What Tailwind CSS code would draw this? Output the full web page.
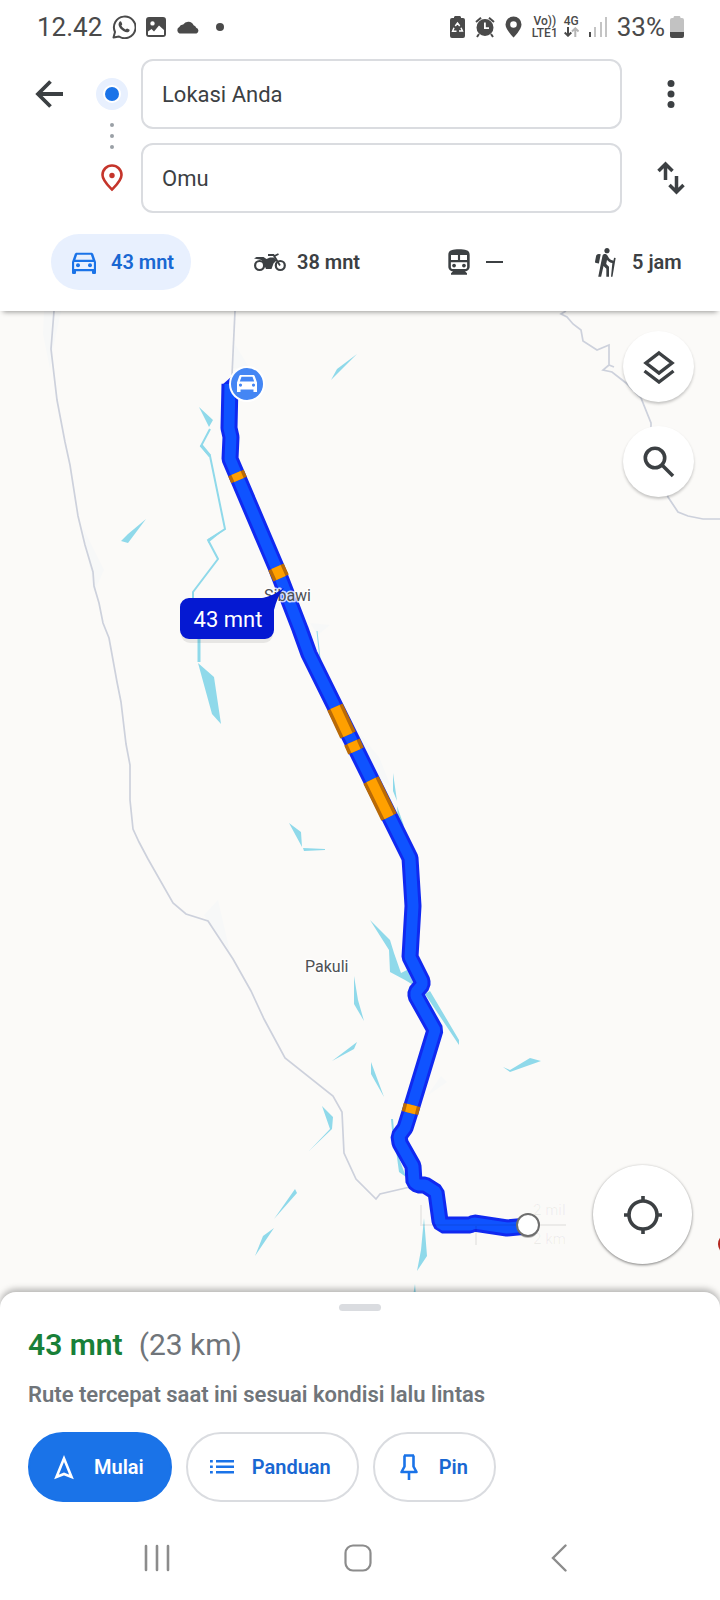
<!doctype html>
<html lang="id">
<head>
	<meta charset="utf-8">
	<meta name="viewport" content="width=device-width, initial-scale=1.0">
	<title>Rute ke Omu</title>
	<script src="https://cdn.jsdelivr.net/npm/@tailwindcss/browser@4"></script>
</head>
<body class="bg-white font-[Roboto,sans-serif] text-[#3c4043]">
	<div class="min-h-screen flex flex-col">

		<!-- status bar -->
		<div class="h-[53px] flex items-center justify-between pl-[37px] pr-9 text-[26px] leading-none text-[#4a4a4a]">
			<div class="flex items-center gap-[10px]">
				<span>12.42</span>
				<svg class="size-6" viewBox="0 0 24 24" fill="none" stroke="currentColor" stroke-width="2">
					<path d="M1.500 22.500l1.500-5.500A10.800 10.800 0 1 1 7 21.500z" stroke-linejoin="round"/>
					<path d="M7.200 7.200c.7-1.200 1.800-1 2.200-.2l.8 1.900c.2.500-.8 1.300-.8 1.700.8 1.800 2.200 3 4 3.800.5.1 1.200-1.100 1.700-1l2.200 1c.6.500.2 1.800-.5 2.300-1.300 1-3 .8-5.500-.6-2.200-1.300-4.100-3.700-4.600-5.500-.3-1.300 0-2.500.5-3.400z" fill="currentColor" stroke="none"/>
				</svg>
				<svg class="w-5 h-[22px]" viewBox="0 0 20 22">
					<path fill="currentColor" fill-rule="evenodd" d="M3 1h14a3 3 0 0 1 3 3v14a3 3 0 0 1-3 3H3a3 3 0 0 1-3-3V4a3 3 0 0 1 3-3zM2 15.500V19h16v-5l-5-4.500-5 6-2.500-2.500zM6.500 5.200a2.200 2.200 0 1 0 0 4.400 2.200 2.200 0 0 0 0-4.400z"/>
				</svg>
				<svg class="w-6 h-[14px]" viewBox="0 0 24 14"><path fill="currentColor" d="M3.500 13.500a3.500 3.500 0 0 1-.2-6.400 4 4 0 0 1 3.900-2.700A6 6 0 0 1 17.600 5.200a3.500 3.500 0 0 1 2.600 2.600 3 3 0 0 1 .3 5.700z"/></svg>
				<span class="size-2 rounded-full bg-[#4a4a4a] ml-[6px]"></span>
			</div>
			<div class="flex items-center gap-[10px]">
				<svg class="w-[15px] h-[22px]" viewBox="0 0 15 22">
					<path fill="currentColor" d="M4 2V1.500C4 .6 4.600 0 5.500 0h4c.9 0 1.500.6 1.500 1.500V2h2a2 2 0 0 1 2 2v16a2 2 0 0 1-2 2H2a2 2 0 0 1-2-2V4a2 2 0 0 1 2-2z"/>
					<path fill="none" stroke="#fff" stroke-width="1.500" d="M5.300 10l2.200-3 2.200 3M11 11.800l1.400 3.200H9M4 11.800L2.600 15.200H6.500"/>
				</svg>
				<svg class="w-5 h-[22px]" viewBox="0 0 20 22">
					<path fill="currentColor" fill-rule="evenodd" d="M10 3a8.500 8.500 0 1 1 0 17 8.500 8.500 0 0 1 0-17zM9 6.500v6.500h5v-1.800h-3.200V6.500z"/>
					<path stroke="currentColor" stroke-width="2" d="M1 6l5-4.300M19 6l-5-4.300M4 18l-2 3M16 18l2 3"/>
				</svg>
				<svg class="w-[17px] h-[22px]" viewBox="0 0 17 22">
					<path fill="currentColor" fill-rule="evenodd" d="M8.500.500a8 8 0 0 1 8 8c0 5-8 13-8 13s-8-8-8-13a8 8 0 0 1 8-8zm0 4.700a3.300 3.300 0 1 0 0 6.600 3.300 3.300 0 0 0 0-6.600z"/>
				</svg>
				<div class="flex gap-[6px] text-xs leading-[12px] font-medium text-center">
					<div>Vo))<br>LTE1</div>
					<div class="flex flex-col items-center">
						4G
						<svg class="w-[15px] h-[10px]" viewBox="0 0 15 10" fill="none" stroke-width="2">
							<path stroke="currentColor" d="M4 0v8.500M.7 5.500L4 8.700l3.300-3.200"/>
							<path stroke="#b5b5b5" d="M11.300 10V1.500M8 4.500l3.300-3.200L14.600 4.500"/>
						</svg>
					</div>
				</div>
				<svg class="w-[18px] h-5" viewBox="0 0 18 20">
					<path fill="currentColor" d="M0 15h2v5H0z"/>
					<path fill="#c4c4c4" d="M5 10h2v10H5zM11 5h2v15h-2zM16 0h2v20h-2z"/>
				</svg>
				<div class="flex items-center gap-[5px]">
					<span>33%</span>
					<svg class="w-[14px] h-[22px]" viewBox="0 0 14 22">
						<path fill="#c2c2c2" d="M3.500 2V1.500C3.500.6 4 0 5 0h4c1 0 1.500.6 1.500 1.500V2H12a2 2 0 0 1 2 2v12H0V4a2 2 0 0 1 2-2z"/>
						<path fill="currentColor" d="M0 16h14v4a2 2 0 0 1-2 2H2a2 2 0 0 1-2-2z"/>
					</svg>
				</div>
			</div>
		</div>

		<!-- directions header -->
		<header class="relative z-10 bg-white pt-[6px] pb-[21px] shadow-[0_4px_5px_-3px_rgba(0,0,0,0.4)]">
			<form class="grid grid-cols-[68px_58px_1fr_98px] gap-y-[14px] items-center justify-items-center pl-[15px]">
				<button type="button" aria-label="Kembali">
					<svg class="size-7" viewBox="0 0 28 28" fill="none" stroke="currentColor" stroke-width="3.800"><path d="M28 14H3M15.500 1.500L3 14l12.500 12.500"/></svg>
				</button>
				<svg class="row-span-2 w-8 h-[116px]" viewBox="0 0 32 116">
					<circle cx="16" cy="16" r="16" fill="#e8f0fe"/>
					<circle cx="16" cy="16" r="9" fill="#fff"/>
					<circle cx="16" cy="16" r="7" fill="#1a73e8"/>
					<g fill="#9aa0a6"><circle cx="16" cy="47" r="2"/><circle cx="16" cy="58" r="2"/><circle cx="16" cy="69" r="2"/></g>
					<path fill="none" stroke="#c5352b" stroke-width="2.600" d="M16 111.500c-4-4-9.500-9-9.500-14.500a9.500 9.500 0 0 1 19 0c0 5.500-5.500 10.500-9.500 14.500z"/>
					<circle cx="16" cy="97.500" r="2.700" fill="#c5352b"/>
				</svg>
				<input type="text" aria-label="Titik awal" value="Lokasi Anda" class="w-full h-[70px] rounded-xl border-2 border-[#dadce0] px-[19px] text-[22px]">
				<button type="button" aria-label="Opsi lainnya">
					<svg class="w-2 h-7" viewBox="0 0 8 28" fill="currentColor"><circle cx="4" cy="3.500" r="3.500"/><circle cx="4" cy="14" r="3.500"/><circle cx="4" cy="24.500" r="3.500"/></svg>
				</button>
				<span></span>
				<input type="text" aria-label="Tujuan" value="Omu" class="w-full h-[70px] rounded-xl border-2 border-[#dadce0] px-[19px] text-[22px]">
				<button type="button" aria-label="Tukar titik awal dan tujuan">
					<svg class="w-7 h-[34px]" viewBox="0 0 28 34" fill="none" stroke="currentColor" stroke-width="3.500"><path d="M8.500 19V3M1.500 10l7-7 7 7M19.500 15v16M12.500 24l7 7 7-7"/></svg>
				</button>
			</form>

			<div class="grid grid-cols-[186fr_189fr_146fr_148fr] justify-items-start mt-[21px] pl-[51px] text-xl font-semibold">
				<button type="button" aria-pressed="true" class="h-14 flex items-center gap-[15px] rounded-full bg-[#e8f0fe] pl-[21px] pr-[17px] text-[#1967d2]">
					<span class="w-6 flex justify-center">
						<svg class="size-8 shrink-0 text-[#1a73e8]" viewBox="0 0 24 24" fill="currentColor"><path d="M18.920 6.010C18.720 5.420 18.160 5 17.500 5h-11c-.66 0-1.210.42-1.420 1.010L3 12v8c0 .55.45 1 1 1h1c.55 0 1-.45 1-1v-1h12v1c0 .55.45 1 1 1h1c.55 0 1-.45 1-1v-8l-2.080-5.990zM6.850 6.600h10.290l1.280 3.800H5.570L6.850 6.600zM19.400 17.200H4.600v-5.200h14.800v5.200z"/><circle cx="7.500" cy="14.500" r="1.500"/><circle cx="16.500" cy="14.500" r="1.500"/></svg>
					</span>
					43 mnt
				</button>
				<button type="button" class="h-14 flex items-center gap-[15px] rounded-full pl-[21px] pr-[17px]">
					<span class="w-6 flex justify-center">
						<svg class="w-8 h-5 shrink-0" viewBox="0 0 32 20">
							<g fill="none" stroke="currentColor" stroke-width="2.200"><circle cx="5.600" cy="13.500" r="4.500"/><circle cx="26.300" cy="13.500" r="4.500"/><path d="M14 3h5.500l6.500 10.500M19.500 4.500l5-2.500" stroke-width="1.800"/></g>
							<path fill="currentColor" d="M0 6.500l2.500-1.500h7l3 2 3.500-1.500h4l2.500 3-3 3-2 5.500h-5.500l-2-4.500C9.500 9.800 8 8 5.500 7.500z"/>
						</svg>
					</span>
					38 mnt
				</button>
				<button type="button" aria-label="Transportasi umum" class="h-14 flex items-center gap-[15px] rounded-full pl-[21px] pr-[17px]">
					<span class="w-6 flex justify-center">
						<svg class="size-8 shrink-0" viewBox="0 0 24 24" fill="currentColor"><path fill-rule="evenodd" d="M12 2.500c-4.420 0-8 .5-8 4V15.500C4 17.430 5.570 19 7.500 19L6 20.500v1h12v-1L16.500 19c1.930 0 3.500-1.570 3.500-3.500v-9c0-3.500-3.580-4-8-4zM6 6.800h5.200v3.700H6zM12.800 6.800H18v3.700h-5.200zM5.900 12.200h12.200v3.500c0 1-.6 1.500-1.500 1.500H7.400c-.9 0-1.500-.5-1.500-1.500z"/><circle cx="8.300" cy="14.700" r="1.400"/><circle cx="15.700" cy="14.700" r="1.400"/></svg>
					</span>
					<span class="w-[17px] h-[2px] bg-[#3c4043]"></span>
				</button>
				<button type="button" class="h-14 flex items-center gap-[15px] rounded-full pl-[21px] pr-[17px]">
					<span class="w-6 flex justify-center">
						<svg class="size-8 shrink-0" viewBox="0 0 24 24" fill="currentColor"><path d="M13.500 5.500c1.100 0 2-.9 2-2s-.9-2-2-2-2 .9-2 2 .9 2 2 2zM17.500 10.780c-1.230-.37-2.220-1.170-2.800-2.180l-1-1.600c-.41-.65-1.110-1-1.840-1-.78 0-1.590.5-1.780 1.440S7 23 7 23h2.100l1.800-8 2.100 2v6h2v-7.500l-2.100-2 .6-3c1 1.150 2.410 2.010 4 2.340L16.500 23h1.100L20 9l-1.200-.2-.5 2.200zM7.430 13.130l-2.120-.41c-.54-.11-.9-.63-.79-1.170l.76-3.930c.21-1.080 1.260-1.790 2.340-1.580l1.160.23-1.350 6.860z"/></svg>
					</span>
					5 jam
				</button>
			</div>
		</header>

		<!-- map -->
		<main class="relative flex-1 min-h-[600px] bg-[#fbfaf8] overflow-hidden">
			<svg class="absolute inset-0 w-full h-full" viewBox="0 311 720 997" preserveAspectRatio="xMidYMin slice" font-family="Roboto, sans-serif">
				<g fill="#f7f8f8">
					<path d="M44 311h17l-8 38-3 20-7-35zM235 344l13 22-16 3zM83 528l21 42-10 22zM204 915l14-15 12 52-22-31zM310 623l20 2-12 10zM354 727l25 30 12 30-14-10zM441 1076l6 6-20 14z"/>
				</g>

				<!-- water -->
				<g fill="#8fd9ea">
					<path d="M331 380l6-11 20-15zM121 541l7-7 18-15-18 24zM199 407l14 13-4 7zM198 663l16 14 7 47-9-10zM289 823l12 9 1 15zM303 848l22 1v1l-21 1z"/>
					<path d="M393 773l2 14 2 14-4-10zM397 806l7 20-6-6zM370 920l20 20 4 13 7 20 6-3 8 16-10-6-15-8-1-22zM430 991l29 49v5l-34-51zM354 976l4 24 6 21-10-17z"/>
					<path d="M332 1061l25-19-3 7zM371 1062l13 35-13-23zM322 1106l11 11-1 12-23 22 21-22zM295 1189l2 4-23 26zM274 1228l-19 28 8-20zM424 1218l3 38-10 15 4-21zM415 1284l1 12h-3zM396 1150l10 27-7-5zM503 1067l7 3 20-12 11 3-31 11zM391 1119l2 0 1 12-2-1z"/>
				</g>
				<g fill="none" stroke="#8fd9ea">
					<path stroke-width="2" d="M210 429l-9 17 9 10 15 73-17 11 10 19-25 33v20"/>
					<path stroke-width="3" d="M201 445l9 11M199 630v32"/>
					<path stroke-width="1" d="M317 631l3 28"/>
				</g>
				<path fill="#8fd9ea" d="M225 529l-17 14v-4z"/>

				<!-- roads -->
				<g fill="none" stroke="#cdd1dc" stroke-width="1.700">
					<path d="M54 311L51 349 57 400 65 442 70 465 78 516 85 545 93 572 94 586 99 603 103 623 109 638 111 649 117 682 121 702 126 744 130 765V800L133 829 139 842 148 859 173 903 186 914 208 921 233 959 251 991 264 1019 285 1058 333 1096 342 1112 344 1153 356 1179 376 1199 380 1194 410 1187"/>
					<path d="M235 311L232 375"/>
					<path d="M566 311L561 314 567 317 573 324 581 330 583 341 597 350 609 345V365L603 370 612 372 626 383 641 398 651 423V450L668 497 678 512 688 516 703 519H720M609 365l5 2"/>
				</g>

				<!-- route -->
				<defs>
					<path id="rute" d="M230 384L229 428 231 437 230 459 276 567 300 629 309 654 410 858 413 906 410 957 422 981V985L416 992V996L435 1030 411 1109 405 1128 399 1136 400 1143 413 1166 414 1182 418 1185 425 1185 436 1192 440 1221 442 1225H470L474 1223 507 1228 528 1226"/>
					<path id="macet" d="M236 473l3 7M276 567l5 11M335 707l13 28M352 742l4 9M371 780l18 37M412 1105l-2 8"/>
				</defs>
				<path fill="#1029f0" d="M222 385l9-8v12h-9z"/>
				<g fill="none" stroke-linejoin="bevel">
					<use href="#rute" stroke="#1029f0" stroke-width="17"/>
					<use href="#rute" stroke="#0f53ff" stroke-width="11"/>
					<use href="#macet" stroke="#b96a06" stroke-width="17"/>
					<use href="#macet" stroke="#ffa000" stroke-width="10"/>
				</g>

				<!-- scale bar, almost faded out -->
				<g fill="#000" fill-opacity=".06" font-size="15">
					<path d="M420 1205h2v19h144v2H420zM475 1226h2v19h-2z"/>
					<text x="533" y="1215">2 mil</text>
					<text x="533" y="1244">2 km</text>
				</g>

				<!-- place names -->
				<g fill="#4d5054" font-size="16" stroke="#fff" stroke-opacity=".8" stroke-width="3" stroke-linejoin="round" paint-order="stroke">
					<text x="264" y="601">Sibawi</text>
					<text x="305" y="972">Pakuli</text>
				</g>

				<circle cx="528" cy="1227" r="11" fill="#000" fill-opacity=".25"/>
				<circle cx="528" cy="1225" r="11" fill="#fff" stroke="#6e6e6e" stroke-width="2"/>
				<circle cx="729" cy="1244" r="11" fill="#b3261e"/>

				<!-- start marker -->
				<circle cx="247" cy="384" r="18" fill="#fff"/>
				<circle cx="247" cy="384" r="16" fill="#4486f4"/>
				<path fill="#fff" fill-rule="evenodd" d="M241 375h12c1 0 1.500.4 1.800 1.200l2.200 6.300v9.500h-3.500v-2.500h-13v2.500H237v-9.500l2.200-6.300c.3-.8.8-1.200 1.800-1.200zM241.500 376.800l-1.700 4.700h14.400l-1.700-4.700zM240.500 383.500a1.600 1.600 0 1 0 0 3.200 1.600 1.600 0 0 0 0-3.200zM253.500 383.500a1.600 1.600 0 1 0 0 3.200 1.600 1.600 0 0 0 0-3.200z"/>

				<!-- time bubble -->
				<rect x="181" y="602" width="92" height="41" rx="9" fill="#000" fill-opacity=".08"/>
				<path fill="#0519d2" d="M189 598H262C270 597 278 592 284 588 279 594 276 602 274 610V630a9 9 0 0 1-9 9H189a9 9 0 0 1-9-9V607a9 9 0 0 1 9-9z"/>
				<text x="228" y="627" text-anchor="middle" font-size="22" fill="#fff">43 mnt</text>
			</svg>

			<div class="absolute right-[26px] top-5 flex flex-col gap-6">
				<button type="button" aria-label="Lapisan peta" class="size-[71px] rounded-full bg-white flex items-center justify-center shadow-[0_2px_3px_rgba(0,0,0,0.22)]">
					<svg class="w-8 h-[34px]" viewBox="0 0 32 34" fill="none" stroke="currentColor" stroke-width="3.400"><path d="M16 3l13 10-13 10L3 13zM1.500 21L16 32l14.500-11"/></svg>
				</button>
				<button type="button" aria-label="Telusuri" class="size-[71px] rounded-full bg-white flex items-center justify-center shadow-[0_2px_3px_rgba(0,0,0,0.22)]">
					<svg class="size-8" viewBox="0 0 32 32" fill="none" stroke="currentColor" stroke-width="3.600"><circle cx="12" cy="12" r="9.700"/><path d="M19 19L30 30"/></svg>
				</button>
			</div>
			<button type="button" aria-label="Lokasi saya" class="absolute right-7 bottom-11 size-[99px] rounded-full bg-white flex items-center justify-center shadow-[0_1px_3px_rgba(0,0,0,0.5)]">
				<svg class="size-[38px]" viewBox="0 0 38 38" fill="none" stroke="currentColor" stroke-width="3.600"><circle cx="19" cy="19" r="14"/><path d="M19 0v6M19 32v6M0 19h6M32 19h6"/></svg>
			</button>
		</main>

		<!-- bottom sheet -->
		<section class="relative -mt-4 rounded-t-2xl bg-white shadow-[0_-3px_6px_rgba(0,0,0,0.28)]">
			<div class="pt-3 px-7">
				<div class="mx-auto w-[42px] h-[7px] rounded-full bg-[#dadce0]"></div>
				<h1 class="mt-4 flex gap-4 text-[30px] leading-9 font-semibold text-[#188038]">43 mnt <span class="font-normal text-[#70757a]">(23 km)</span></h1>
				<p class="mt-[19px] text-[22px] leading-[26px] font-semibold text-[#70757a]">Rute tercepat saat ini sesuai kondisi lalu lintas</p>
				<div class="mt-6 flex gap-[14px] text-xl font-semibold text-[#1967d2]">
					<button type="button" class="h-[70px] flex items-center gap-[18px] rounded-full border-2 border-[#1a73e8] bg-[#1a73e8] pl-[22px] pr-[26px] text-white">
						<svg class="w-6 h-7" viewBox="0 0 24 28" fill="none" stroke="currentColor" stroke-width="2.600"><path d="M12 5.500l7.500 18.500L12 21l-7.500 3z"/></svg>
						Mulai
					</button>
					<button type="button" class="h-[70px] flex items-center gap-[18px] rounded-full border-2 border-[#dadce0] pl-[22px] pr-[26px]">
						<svg class="w-6 h-4" viewBox="0 0 24 16" fill="#1a73e8"><path d="M6 1h18v2.600H6zM6 6.500h18v2.600H6zM6 12h18v2.600H6zM0 1h2.800v2.600H0zM0 6.500h2.800v2.600H0zM0 12h2.800v2.600H0z"/></svg>
						Panduan
					</button>
					<button type="button" class="h-[70px] flex items-center gap-[18px] rounded-full border-2 border-[#dadce0] pl-[22px] pr-[26px]">
						<svg class="w-6 h-7" viewBox="0 0 24 28" fill="none" stroke="#1a73e8" stroke-width="2.600"><path d="M7 2.500h10M7.500 2.500v11L4.500 19h15l-3-5.500v-11M12 19v8" stroke-linejoin="round"/></svg>
						Pin
					</button>
				</div>
			</div>

			<nav class="mt-[14px] h-[84px] flex items-center pl-14 pr-[60px] text-[#8c8c8c]">
				<button type="button" aria-label="Aplikasi terbaru" class="flex-1 flex justify-center">
					<svg class="w-[26px] h-7" viewBox="0 0 26 28" stroke="currentColor" stroke-width="2.600" stroke-linecap="round"><path d="M2 2v24M13 2v24M24 2v24"/></svg>
				</button>
				<button type="button" aria-label="Beranda" class="flex-1 flex justify-center">
					<svg class="size-7" viewBox="0 0 28 28" fill="none" stroke="currentColor" stroke-width="2.200"><rect x="1.500" y="1.500" width="25" height="25" rx="7.500"/></svg>
				</button>
				<button type="button" aria-label="Kembali ke layar sebelumnya" class="flex-1 flex justify-center">
					<svg class="w-4 h-7" viewBox="0 0 16 28" fill="none" stroke="currentColor" stroke-width="2.400" stroke-linecap="round"><path d="M14.500 1.500L2 14l12.500 12.500"/></svg>
				</button>
			</nav>
		</section>
	</div>
</body>
</html>
